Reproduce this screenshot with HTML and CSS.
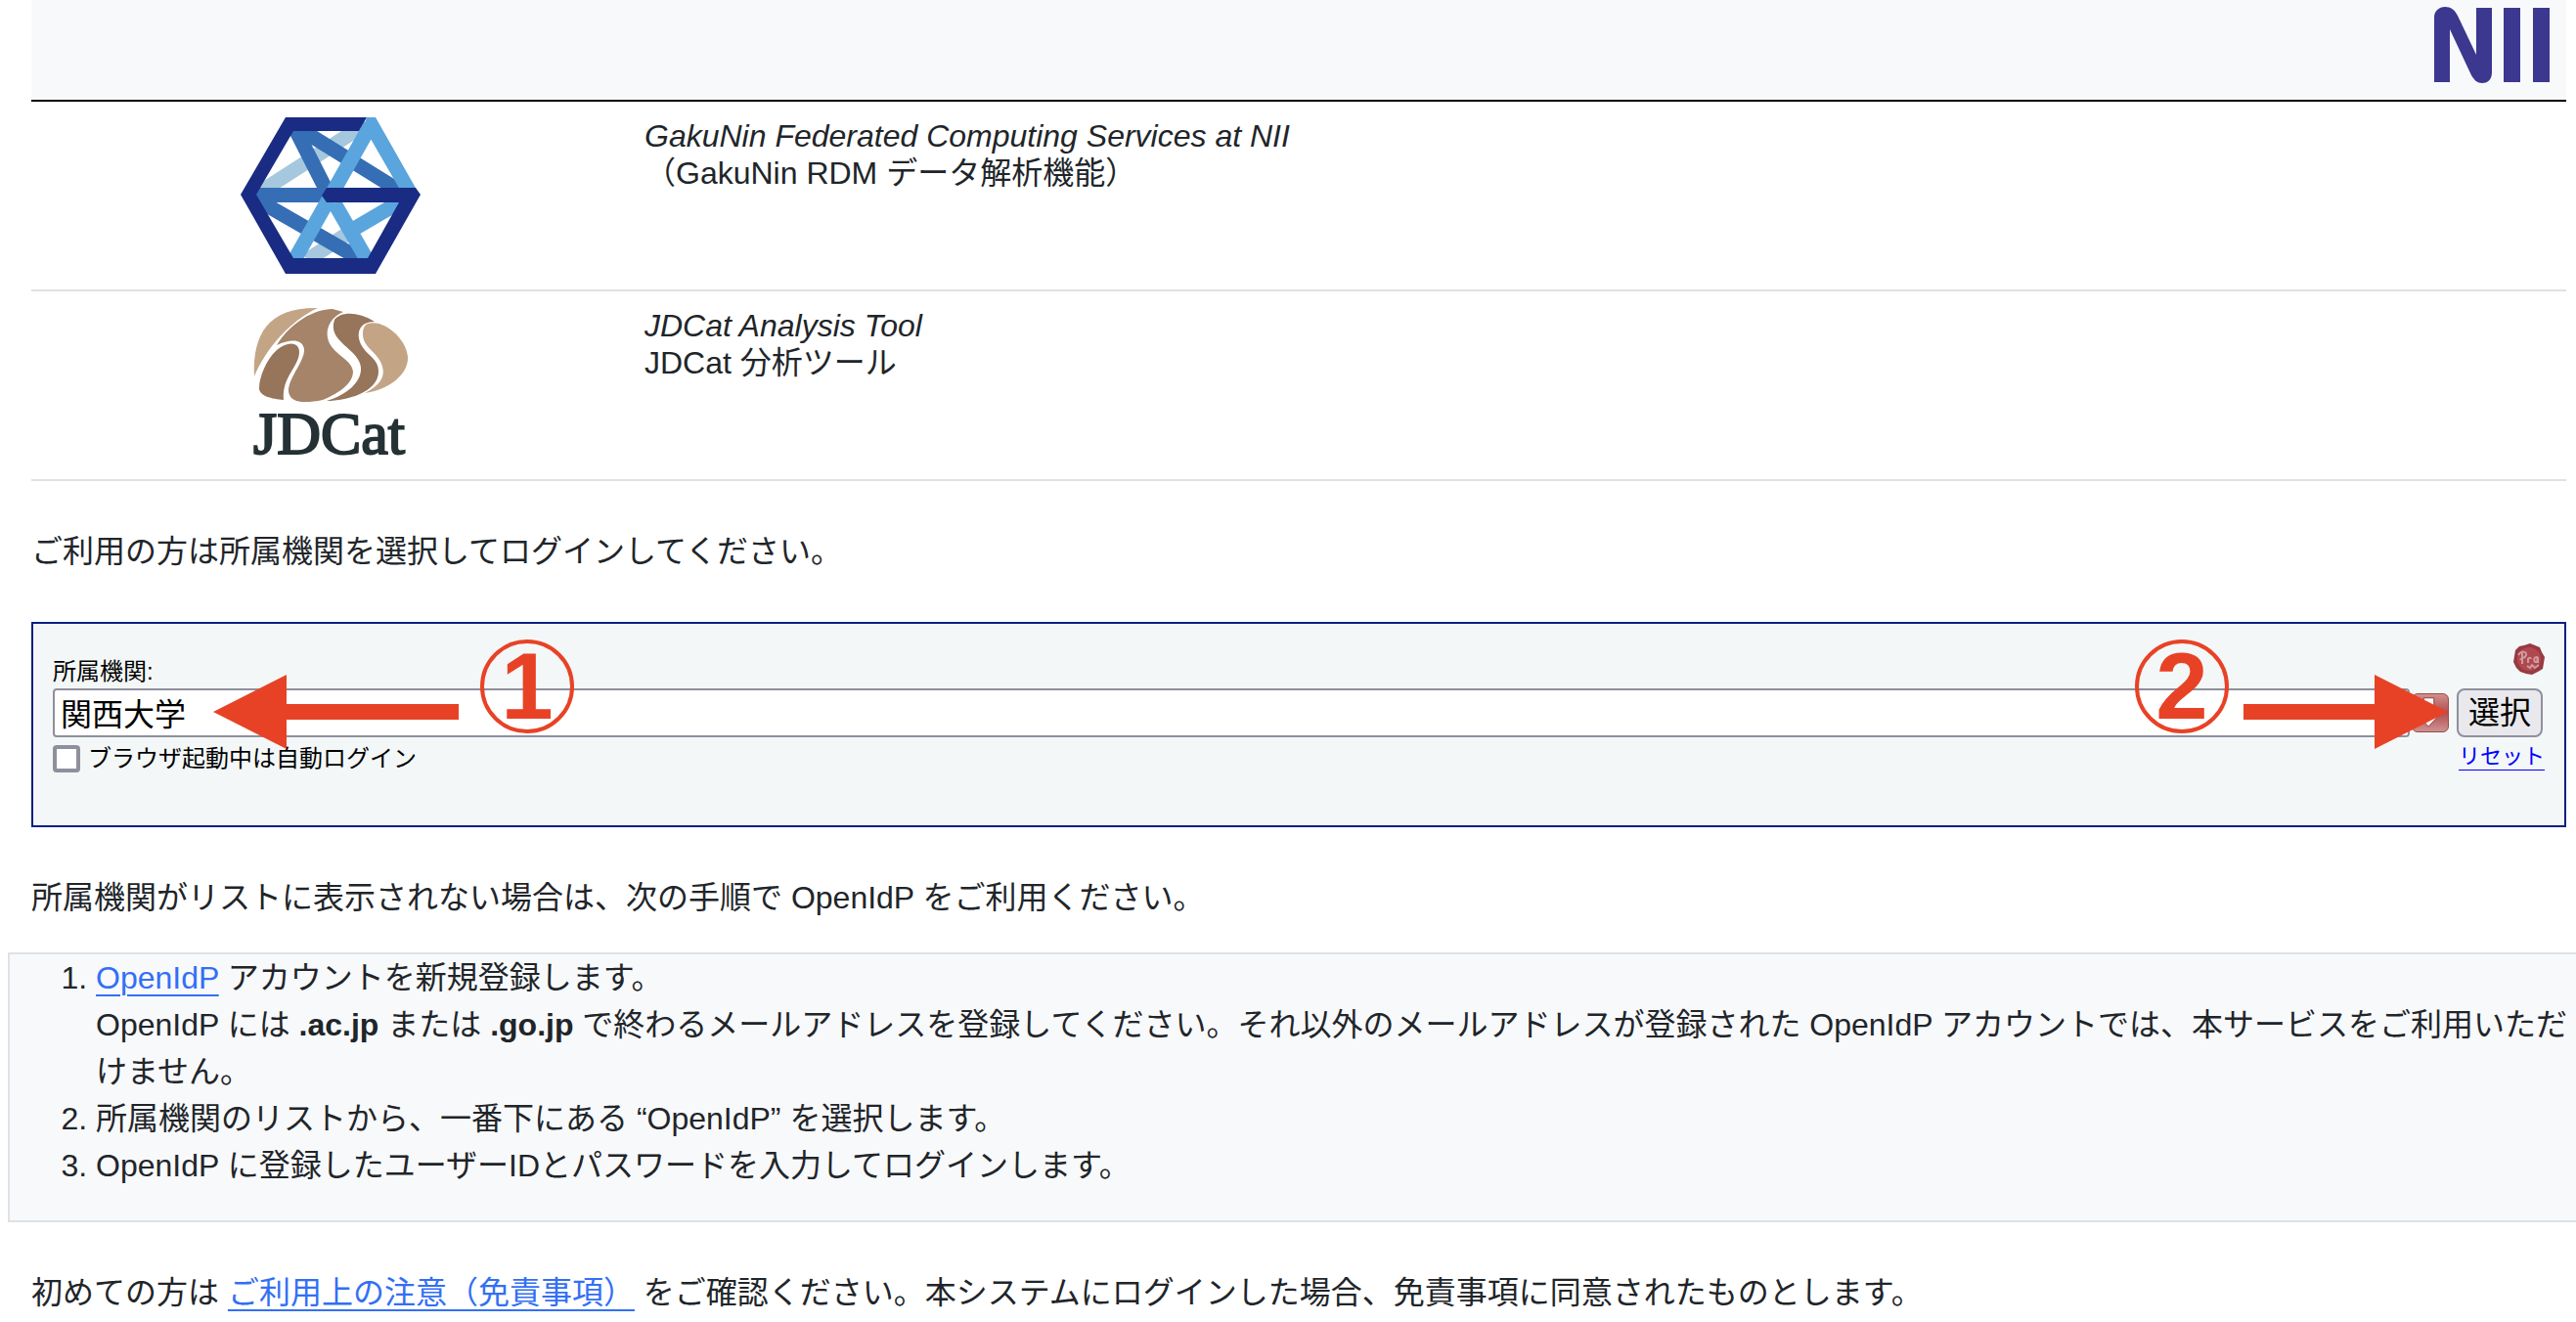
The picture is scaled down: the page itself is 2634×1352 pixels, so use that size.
FILE: index.html
```html
<!DOCTYPE html>
<html lang="ja">
<head>
  <meta charset="UTF-8" />
  <meta name="viewport" content="width=device-width, initial-scale=1" />
  <title>GakuNin Federated Computing Services</title>
  <link rel="stylesheet" href="styles.css">
</head>
<body>

  <header class="header">
    <svg class="nii-logo" viewBox="0 0 118 78" role="img" aria-label="NII">
      <path d="M0 77V11C0 4 5 0 11 0c6 0 10 3 13 9l19 40V1h16v66c0 7-4 11-10 11-5 0-8-3-11-8L16 23v54z"/>
      <path d="M71 1h17v76H71zM101 1h17v76h-17z"/>
    </svg>
  </header>

  <!-- Services -->
  <table class="services">
    <tr>
      <td class="logo-cell">
        <svg class="logo" viewBox="0 0 184 160" role="img" aria-label="GakuNin">
          <g fill="none" stroke-width="15">
            <path d="M22 75L120 12M68 146L114 116" stroke="#a5c8de"/>
            <path d="M14 79.5H88M56 12L90 79M56 9L164 76M18 85L124 146" stroke="#356eb5"/>
            <path d="M55 146L133 8M96 88L130 147M116 114L162 87" stroke="#5aa5dd"/>
          </g>
          <path d="M129 0h9l42 74h-17L133 22l-9-8z" fill="#5aa5dd"/>
          <path d="M46 0h83l-8 14H54L16 79l38 65h76l32-57H88l-5-7 5-8h91l5 7-46 81H46L0 79z" fill="#1a2b83"/>
        </svg>
      </td>
      <td class="service-name">
        <em>GakuNin Federated Computing Services at NII</em><br>
        （GakuNin RDM データ解析機能）
      </td>
    </tr>
    <tr>
      <td class="logo-cell">
        <svg class="logo" viewBox="0 0 160 160" role="img" aria-label="JDCat">
          <path d="M2 71C0 27 17 0 67 1C39 14 14 42 2 71z" fill="#c3a586"/>
          <path d="M25 39C39 16 63 2 82 2l11 3C75 13 74 29 80 39c7 11 22 16 23 27c0 14-19 24-31 29c-20 4-34 3-35-9c0-14 17-31 16-43C51 32 38 33 25 39z" fill="#a58469"/>
          <path d="M25 44c10-9 23-9 23 2c0 15-18 25-16 49C20 94 7 91 7 83C7 72 14 54 25 44z" fill="#96755a"/>
          <path d="M84 13C91 4 109 5 125 15C109 15 106 27 111 38c6 12 19 15 18 29c-1 20-32 29-53 29C96 90 112 77 111 62C110 43 76 36 84 13z" fill="#96755a"/>
          <path d="M118 17c18-5 40 17 41 34c1 18-20 34-44 37c16-8 21-17 18-27c-3-14-20-19-20-33c0-5 1-9 5-11z" fill="#c3a586"/>
          <text x="1" y="150" class="jdcat-word">JDCat</text>
        </svg>
      </td>
      <td class="service-name">
        <em>JDCat Analysis Tool</em><br>
        JDCat 分析ツール
      </td>
    </tr>
  </table>

  <p class="text">ご利用の方は所属機関を選択してログインしてください。</p>

  <!-- Institution selector -->
  <form class="wayf">
    <div class="wayf-top">
      <label for="idp">所属機関:</label>
      <svg class="seal" viewBox="0 0 32 32" aria-hidden="true">
        <path d="M11 2l6-2 5 2 5 2 2 5 3 5-1 6-1 6-5 3-6 3-6-1-6-2-4-4-3-6 1-6 1-6 4-4z" fill="#983a40"/>
        <circle cx="16" cy="16" r="12" fill="#b0494f"/>
        <path d="M5 12c3-5 9-4 8 0s-5 2-6 5M9 8v13M15 15v5m0-4c2-2 3-1 3 0M25 14c-5-1-5 6-1 5l1-5v6M14 23l3 2 2-3 3 3 4-3" fill="none" stroke="#cf9a9f" stroke-width="2"/>
      </svg>
    </div>
    <div class="wayf-row">
      <input type="text" id="idp" value="関西大学">
      <button type="button" class="drop" aria-label="一覧を表示">
        <svg viewBox="0 0 38 40" aria-hidden="true">
          <path d="M12 4h11v18h6L17 35 6 22h6z" fill="#fff" stroke="#8f3a3a"/>
        </svg>
      </button>
      <button type="submit" class="select-btn">選択</button>
    </div>
    <div class="wayf-bottom">
      <label class="auto-login" for="auto"><input type="checkbox" id="auto">ブラウザ起動中は自動ログイン</label>
      <a class="reset" href="#">リセット</a>
    </div>

    <!-- Step markers -->
    <span class="num num-1">1</span>
    <svg class="arrow arrow-1" viewBox="0 0 251 76" aria-hidden="true">
      <path d="M0 38L75 0v30h176v16H75v30z"/>
    </svg>
    <span class="num num-2">2</span>
    <svg class="arrow arrow-2" viewBox="0 0 209 76" aria-hidden="true">
      <path d="M209 38L134 0v30H0v16h134v30z"/>
    </svg>
  </form>

  <p class="text">所属機関がリストに表示されない場合は、次の手順で OpenIdP をご利用ください。</p>

  <div class="steps">
    <ol>
      <li><a href="#">OpenIdP</a> アカウントを新規登録します。<br>
        OpenIdP には <b>.ac.jp</b> または <b>.go.jp</b> で終わるメールアドレスを登録してください。それ以外のメールアドレスが登録された OpenIdP アカウントでは、本サービスをご利用いただけません。</li>
      <li>所属機関のリストから、一番下にある “OpenIdP” を選択します。</li>
      <li>OpenIdP に登録したユーザーIDとパスワードを入力してログインします。</li>
    </ol>
  </div>

  <p class="text">初めての方は <a href="#">ご利用上の注意（免責事項）</a> をご確認ください。本システムにログインした場合、免責事項に同意されたものとします。</p>

</body>
</html>
```

FILE: styles.css
```css
* {
  box-sizing: border-box;
}
body {
  font-family: "Liberation Sans", "Noto Sans CJK JP", sans-serif;
  font-size: 32px;
  line-height: 48px;
  margin: 0;
  padding: 0 10px 0 32px;
  background: #fff;
  color: #212529;
  overflow-x: hidden;
}
a {
  color: #336ff5;
  text-underline-offset: 6px;
  text-decoration-thickness: 2px;
}
.text {
  margin: 48px 0;
}

/* Header */
.header {
  display: flex;
  justify-content: flex-end;
  padding: 7px 17px 17px;
  background: #f8f9fb;
  border-bottom: 2px solid #000;
}
.nii-logo {
  width: 118px;
  height: 78px;
  fill: #3c388f;
}

/* Services */
.services {
  width: 100%;
  border-collapse: separate;
  border-spacing: 0;
  line-height: 38px;
}
.services td {
  padding: 16px;
  border-bottom: 2px solid #dee2e6;
  vertical-align: top;
}
.services .logo-cell {
  width: 611px;
  text-align: center;
}
.logo {
  display: block;
  height: 160px;
  margin: 0 auto;
  overflow: visible;
}
.jdcat-word {
  font-family: "Liberation Serif", serif;
  font-size: 62px;
  fill: #243135;
  stroke: #243135;
  stroke-width: 2px;
}

/* Institution selector */
.wayf {
  position: relative;
  padding: 20px 20px 50px;
  background: #f3f7f7;
  border: 2px solid #0b2080;
  color: #000;
  font-size: 24px;
  line-height: 32px;
}
.wayf-top {
  display: flex;
  justify-content: space-between;
  align-items: flex-start;
  height: 46px;
}
.wayf-top label {
  margin-top: 13px;
}
.seal {
  width: 32px;
  height: 32px;
}
.wayf-row {
  display: flex;
  align-items: center;
  padding-right: 2px;
}
.wayf-row input {
  flex: 1;
  min-width: 0;
  height: 50px;
  padding: 0 6px 2px;
  font: inherit;
  font-size: 32px;
  background: #fff;
  border: 2px solid #8f8f9d;
  border-radius: 4px;
}
.drop {
  width: 38px;
  height: 40px;
  margin: 0 8px 0 2px;
  padding: 0;
  border: 1px solid #9c4a4a;
  border-radius: 6px;
  background: linear-gradient(#cf8f8f, #b04e4e 50%, #cf9292);
}
.drop svg {
  display: block;
}
.select-btn {
  width: 88px;
  height: 50px;
  padding: 0;
  font: inherit;
  font-size: 32px;
  color: #000;
  background: #e9e9ed;
  border: 2px solid #8f8f9d;
  border-radius: 8px;
}
.wayf-bottom {
  display: flex;
  justify-content: space-between;
  padding-top: 6px;
  padding-bottom: 2px;
}
.auto-login {
  display: flex;
  align-items: center;
  gap: 8px;
}
.auto-login input {
  appearance: none;
  width: 28px;
  height: 28px;
  margin: 0;
  background: #fff;
  border: 4px solid #8f8f9d;
  border-radius: 4px;
}
.reset {
  font-size: 22px;
  line-height: 28px;
  color: #00f;
  text-decoration-thickness: 1px;
}

/* Step markers */
.num {
  position: absolute;
  top: 16px;
  width: 96px;
  height: 96px;
  border: 4px solid #e84226;
  border-radius: 50%;
  color: #e84226;
  font-family: "Liberation Sans", sans-serif;
  font-size: 96px;
  font-weight: bold;
  line-height: 88px;
  text-align: center;
}
.num-1 {
  left: 457px;
}
.num-2 {
  right: 343px;
}
.arrow {
  position: absolute;
  top: 52px;
  height: 76px;
  fill: #e84226;
}
.arrow-1 {
  left: 184px;
}
.arrow-2 {
  right: 119px;
}

/* OpenIdP steps */
.steps {
  margin: -16px -34px 48px -24px;
  border: 2px solid #dee2e6;
  background: #f8f9fb;
}
.steps ol {
  margin: 0 0 32px;
  padding: 0 22px 0 88px;
}
```
